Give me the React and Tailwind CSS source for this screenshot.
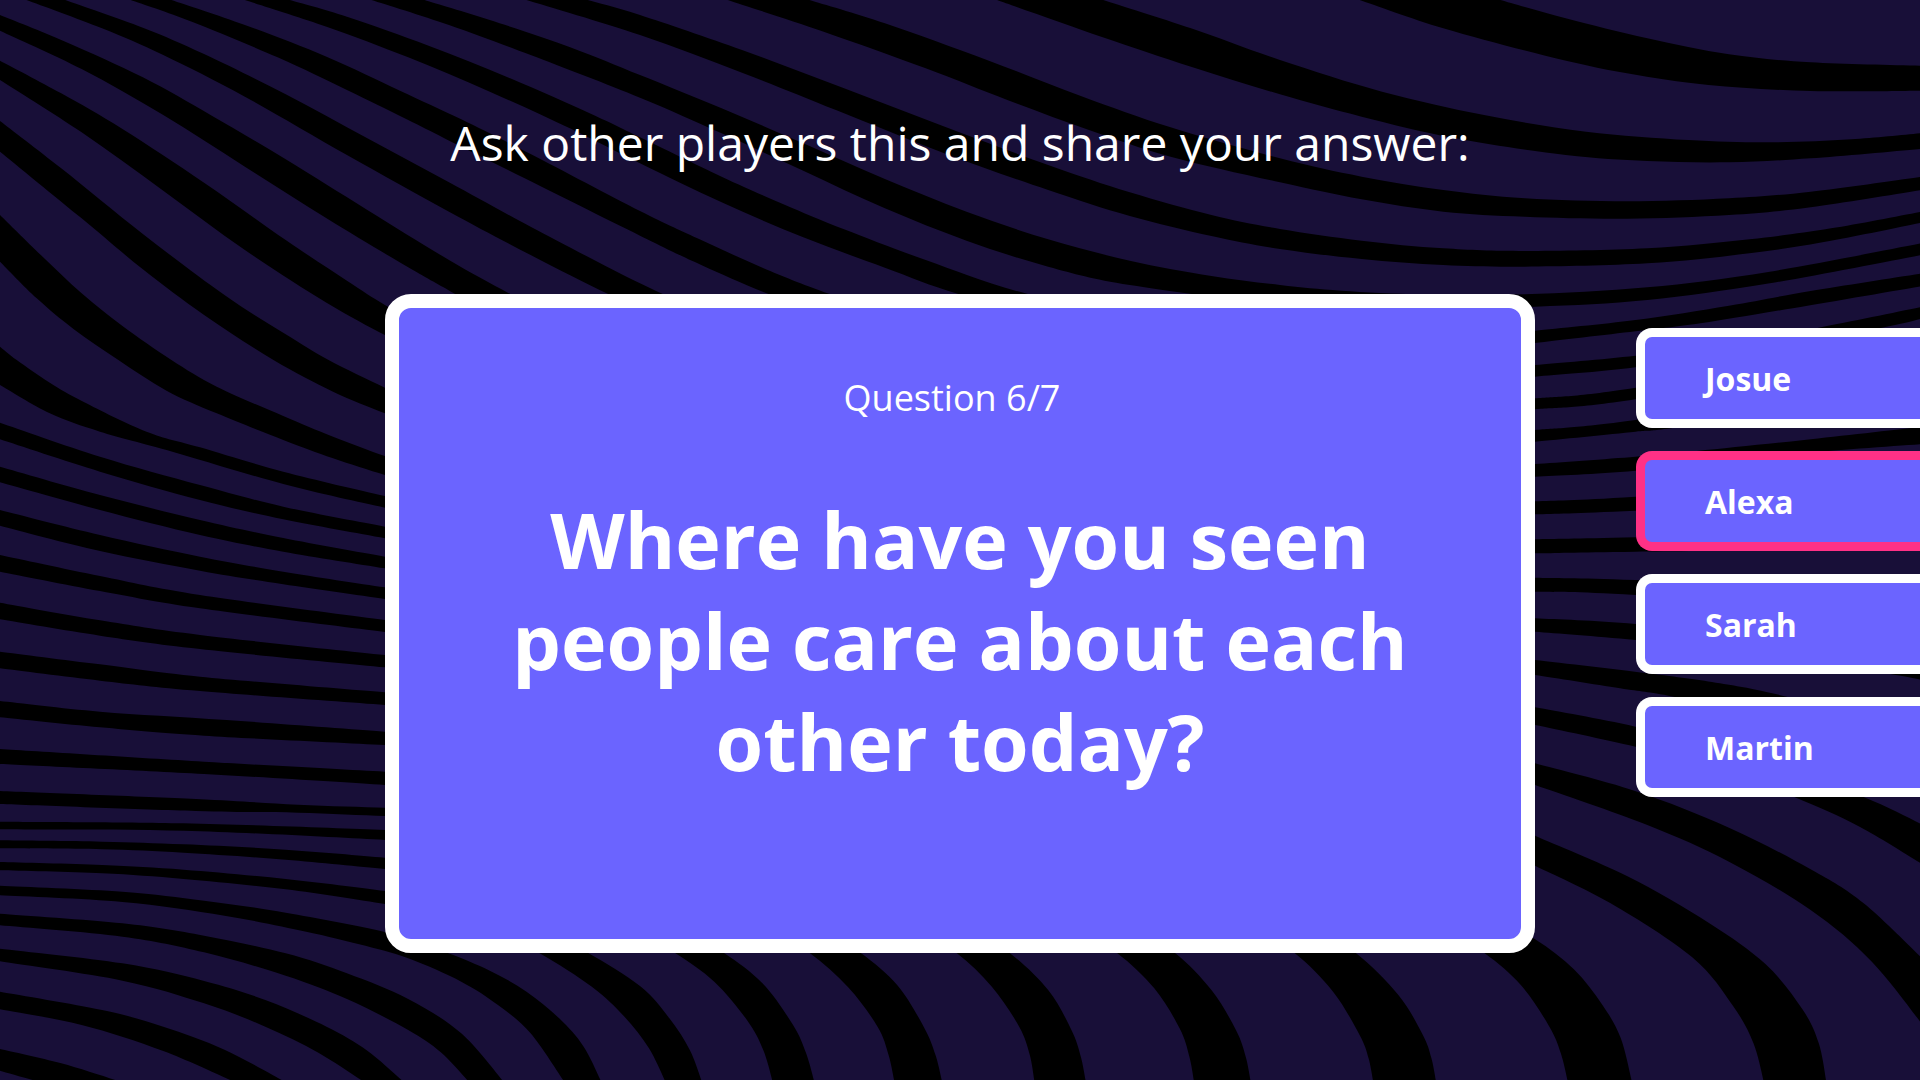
import React from 'react';

const players = [
    { name: 'Josue', active: false },
    { name: 'Alexa', active: true },
    { name: 'Sarah', active: false },
    { name: 'Martin', active: false },
];

const questionLines = ['Where have you seen', 'people care about each', 'other today?'];

// each wave is [upper edge, lower edge], both listed left to right as [x, y]
const waves = [
    // top
    [
        [[3676, 0], [3836, 55], [4036, 115], [4236, 163], [4436, 187], [4720, 198]],
        [[3331, 0], [3536, 85], [3786, 167], [3986, 220], [4186, 255], [4436, 273], [4720, 272]],
    ],
    [
        [[2703, 0], [2918, 85], [3136, 180], [3386, 275], [3636, 345], [3886, 395], [4136, 420], [4336, 427], [4536, 418], [4720, 398]],
        [[2443, 0], [2698, 110], [2918, 200], [3136, 283], [3336, 350], [3566, 415], [3836, 465], [4036, 483], [4236, 487], [4436, 475], [4720, 445]],
    ],
    [
        [[1983, 0], [2168, 70], [2418, 180], [2648, 288], [2868, 382], [3136, 475], [3336, 530], [3536, 570], [3736, 595], [3986, 604], [4236, 595], [4436, 575], [4720, 528]],
        [[1783, 0], [2018, 95], [2268, 205], [2468, 300], [2668, 390], [2868, 470], [3136, 547], [3336, 598], [3536, 635], [3736, 650], [3986, 656], [4236, 645], [4436, 622], [4720, 568]],
    ],
    [
        [[1440, 0], [1568, 45], [1818, 150], [2068, 265], [2318, 382], [2568, 495], [2768, 577], [2968, 645], [3136, 687], [3336, 722], [3536, 745], [3736, 753], [4036, 745], [4286, 718], [4486, 685], [4720, 632]],
        [[1290, 0], [1568, 105], [1818, 218], [2048, 330], [2318, 462], [2568, 570], [2768, 648], [2968, 708], [3136, 747], [3336, 777], [3536, 795], [3736, 800], [4036, 790], [4286, 760], [4486, 722], [4720, 665]],
    ],
    [
        [[1040, 0], [1200, 60], [1400, 143], [1568, 225], [1768, 325], [1968, 430], [2168, 537], [2368, 635], [2568, 718], [2768, 782], [2968, 828], [3136, 855], [3286, 872], [3486, 883], [3736, 883], [4036, 862], [4336, 815], [4720, 727]],
        [[910, 0], [1100, 75], [1300, 165], [1568, 293], [1768, 400], [1968, 512], [2168, 625], [2368, 722], [2568, 800], [2768, 855], [3136, 912], [3436, 928], [3761, 920], [4036, 900], [4336, 850], [4720, 762]],
    ],
    [
        [[710, 0], [850, 50], [1050, 137], [1250, 235], [1450, 343], [1568, 412], [1768, 530], [1918, 612], [2068, 688], [2268, 780], [2518, 882], [2900, 980]],
        [[600, 0], [800, 80], [1000, 172], [1200, 275], [1400, 387], [1568, 490], [1768, 607], [1968, 712], [2168, 803], [2348, 882], [2600, 960]],
    ],
    [
        [[420, 0], [600, 75], [800, 170], [980, 272], [1130, 358], [1300, 462], [1568, 633], [1718, 720], [1868, 803], [2033, 882], [2300, 990]],
        [[320, 0], [470, 65], [680, 172], [850, 270], [1000, 360], [1200, 483], [1568, 707], [1718, 795], [1883, 882], [2100, 980]],
    ],
    [
        [[160, 0], [350, 83], [500, 162], [700, 283], [900, 415], [1100, 547], [1300, 680], [1568, 850], [1750, 950]],
        [[65, 0], [250, 85], [400, 165], [600, 290], [850, 465], [1100, 635], [1300, 765], [1490, 882], [1620, 950]],
    ],
    [
        [[0, 45], [160, 125], [350, 232], [520, 348], [700, 478], [900, 630], [1100, 780], [1250, 882], [1400, 980]],
        [[0, 92], [200, 207], [400, 345], [600, 500], [800, 655], [1000, 802], [1115, 882], [1250, 980]],
    ],
    // left side, running under the question card
    [
        [[0, 182], [150, 280], [300, 387], [500, 548], [700, 720], [850, 842], [943, 915], [1050, 990]],
        [[0, 240], [200, 397], [400, 572], [600, 750], [800, 908], [943, 1005], [1050, 1070]],
    ],
    [
        [[0, 363], [150, 505], [350, 702], [550, 885], [700, 1003], [805, 1080], [943, 1163], [1050, 1220]],
        [[0, 455], [200, 655], [350, 808], [500, 945], [670, 1080], [816, 1175], [943, 1240], [1050, 1290]],
    ],
    [
        [[0, 645], [100, 765], [200, 880], [300, 978], [420, 1080], [531, 1160], [694, 1248], [816, 1310], [943, 1368], [1050, 1410]],
        [[0, 785], [90, 895], [180, 987], [290, 1080], [408, 1172], [531, 1240], [694, 1320], [816, 1375], [943, 1425], [1050, 1460]],
    ],
    [
        [[0, 1040], [41, 1080], [122, 1148], [204, 1205], [359, 1295], [490, 1342], [694, 1415], [943, 1488], [1050, 1515]],
        [[0, 1155], [122, 1240], [245, 1295], [408, 1350], [694, 1452], [943, 1523], [1050, 1550]],
    ],
    [
        [[0, 1268], [245, 1370], [490, 1455], [694, 1520], [943, 1580], [1050, 1605]],
        [[0, 1318], [245, 1415], [490, 1500], [694, 1558], [943, 1615], [1050, 1640]],
    ],
    [
        [[0, 1400], [245, 1485], [490, 1560], [694, 1614], [943, 1670], [1050, 1692]],
        [[0, 1447], [245, 1530], [490, 1605], [694, 1655], [943, 1705], [1050, 1727]],
    ],
    [
        [[0, 1530], [245, 1605], [490, 1670], [694, 1715], [943, 1762], [1050, 1780]],
        [[0, 1577], [245, 1653], [490, 1712], [694, 1753], [943, 1797], [1050, 1815]],
    ],
    [
        [[0, 1665], [245, 1728], [490, 1785], [943, 1860], [1050, 1875]],
        [[0, 1715], [245, 1773], [490, 1825], [943, 1896], [1050, 1910]],
    ],
    [
        [[0, 1808], [245, 1861], [490, 1905], [943, 1965], [1050, 1977]],
        [[0, 1858], [245, 1907], [490, 1947], [943, 2002], [1050, 2013]],
    ],
    [
        [[0, 1955], [245, 1993], [490, 2030], [943, 2077], [1050, 2087]],
        [[0, 2005], [245, 2042], [490, 2073], [943, 2115], [1050, 2124]],
    ],
    [
        [[0, 2103], [245, 2135], [555, 2160], [943, 2195], [1050, 2205]],
        [[0, 2152], [245, 2182], [500, 2207], [943, 2235], [1050, 2242]],
    ],
    [
        [[0, 2247], [500, 2285], [943, 2315], [1050, 2322]],
        [[0, 2292], [500, 2322], [943, 2355], [1050, 2363]],
    ],
    [
        [[0, 2373], [480, 2397], [730, 2414], [943, 2423], [1050, 2428]],
        [[0, 2412], [480, 2433], [730, 2438], [943, 2448], [1050, 2453]],
    ],
    [
        [[0, 2465], [450, 2470], [943, 2490], [1050, 2497]],
        [[0, 2488], [450, 2492], [943, 2520], [1050, 2530]],
    ],
    [
        [[0, 2521], [250, 2525], [450, 2533], [700, 2549], [943, 2573], [1050, 2586]],
        [[0, 2545], [250, 2548], [450, 2558], [700, 2579], [943, 2607], [1050, 2622]],
    ],
    [
        [[0, 2586], [250, 2595], [450, 2609], [700, 2637], [943, 2673], [1050, 2692]],
        [[0, 2611], [250, 2620], [450, 2637], [700, 2668], [943, 2712], [1050, 2735]],
    ],
    // bottom fans
    [
        [[0, 2657], [300, 2675], [500, 2702], [700, 2738], [943, 2796], [1095, 2858], [1200, 2912], [1290, 2975], [1370, 3055], [1430, 3140], [1475, 3250]],
        [[0, 2686], [300, 2706], [550, 2747], [750, 2795], [880, 2833], [1000, 2875], [1130, 2945], [1220, 3015], [1300, 3100], [1385, 3250]],
    ],
    [
        [[0, 2741], [300, 2770], [500, 2807], [700, 2860], [850, 2920], [1000, 2997], [1130, 3100], [1237, 3250]],
        [[0, 2776], [300, 2810], [500, 2857], [700, 2927], [850, 2997], [1000, 3090], [1080, 3157], [1152, 3250]],
    ],
    [
        [[0, 2846], [300, 2890], [500, 2943], [650, 3000], [800, 3080], [900, 3152], [993, 3250]],
        [[0, 2884], [300, 2942], [500, 3010], [650, 3080], [780, 3158], [897, 3250]],
    ],
    [
        [[0, 2975], [250, 3030], [400, 3080], [550, 3149], [705, 3250]],
        [[0, 3028], [200, 3075], [400, 3153], [582, 3250]],
    ],
    [
        [[0, 3147], [150, 3190], [300, 3247]],
        [[0, 3212], [100, 3247]],
    ],
    [
        [[1300, 2770], [1440, 2858], [1568, 2958], [1640, 3055], [1690, 3150], [1721, 3250]],
        [[1180, 2770], [1320, 2858], [1450, 2960], [1530, 3050], [1590, 3145], [1632, 3250]],
    ],
    [
        [[1650, 2770], [1773, 2858], [1868, 2950], [1943, 3075], [1975, 3160], [1996, 3250]],
        [[1530, 2770], [1653, 2858], [1750, 2945], [1830, 3060], [1870, 3150], [1894, 3250]],
    ],
    [
        [[1990, 2770], [2108, 2858], [2198, 2955], [2263, 3080], [2292, 3165], [2309, 3250]],
        [[1860, 2770], [1983, 2858], [2078, 2962], [2150, 3080], [2177, 3165], [2192, 3250]],
    ],
    [
        [[2360, 2770], [2473, 2858], [2568, 2970], [2625, 3090], [2648, 3170], [2661, 3250]],
        [[2230, 2770], [2343, 2858], [2430, 2960], [2497, 3080], [2523, 3165], [2535, 3250]],
    ],
    [
        [[2760, 2770], [2878, 2858], [2968, 2970], [3028, 3090], [3052, 3170], [3065, 3250]],
        [[2620, 2770], [2736, 2858], [2828, 2965], [2890, 3085], [2914, 3170], [2926, 3250]],
    ],
    [
        [[3200, 2770], [3321, 2858], [3426, 2985], [3486, 3105], [3507, 3175], [3519, 3250]],
        [[3050, 2770], [3171, 2858], [3266, 2975], [3331, 3105], [3353, 3175], [3365, 3250]],
    ],
    [
        [[3640, 2740], [3761, 2818], [3856, 2908], [3926, 3015], [3971, 3115], [3999, 3250]],
        [[3500, 2750], [3636, 2858], [3726, 2955], [3796, 3080], [3824, 3160], [3842, 3250]],
    ],
    [
        [[3700, 2470], [3761, 2507], [3986, 2628], [4186, 2768], [4326, 2893], [4416, 3028], [4456, 3130], [4475, 3250]],
        [[3700, 2560], [3761, 2597], [3946, 2710], [4146, 2872], [4246, 3018], [4296, 3130], [4322, 3250]],
    ],
    // right side, running under the player cards
    [
        [[3700, 2270], [3761, 2290], [4006, 2373], [4236, 2483], [4436, 2608], [4566, 2710], [4720, 2888]],
        [[3700, 2330], [3761, 2355], [4036, 2475], [4236, 2585], [4436, 2730], [4586, 2885], [4720, 3090]],
    ],
    [
        [[3700, 2110], [3761, 2122], [4007, 2180], [4300, 2270], [4566, 2391], [4720, 2480]],
        [[3700, 2163], [3761, 2175], [4007, 2240], [4200, 2300], [4396, 2391], [4556, 2480], [4720, 2600]],
    ],
    [
        [[3700, 1973], [3761, 1980], [4051, 2022], [4214, 2050], [4377, 2090], [4720, 2200]],
        [[3700, 2018], [3761, 2025], [3969, 2065], [4100, 2090], [4377, 2160], [4720, 2290]],
    ],
    [
        [[3700, 1852], [3761, 1855], [4007, 1872], [4377, 1920], [4720, 1990]],
        [[3700, 1890], [3761, 1895], [4007, 1920], [4377, 1970], [4631, 2022], [4720, 2042]],
    ],
    [
        [[3700, 1732], [3761, 1733], [4007, 1740], [4720, 1775]],
        [[3700, 1774], [3761, 1775], [4007, 1785], [4720, 1850]],
    ],
    [
        [[3700, 1619], [3761, 1618], [4007, 1612], [4720, 1590]],
        [[3700, 1661], [3761, 1660], [4007, 1655], [4720, 1645]],
    ],
    [
        [[3700, 1507], [3761, 1504], [4007, 1490], [4720, 1430]],
        [[3700, 1546], [3761, 1543], [4007, 1532], [4720, 1490]],
    ],
    [
        [[3700, 1395], [3761, 1392], [4007, 1370], [4157, 1353], [4420, 1320], [4720, 1279]],
        [[3700, 1433], [3761, 1430], [4007, 1412], [4377, 1363], [4720, 1331]],
    ],
    [
        [[3700, 1296], [3761, 1290], [4007, 1260], [4720, 1130]],
        [[3700, 1331], [3761, 1325], [4007, 1295], [4116, 1281], [4720, 1180]],
    ],
    [
        [[3700, 1200], [3761, 1195], [4007, 1163], [4720, 1010]],
        [[3700, 1233], [3761, 1228], [4007, 1198], [4720, 1050]],
    ],
    [
        [[3700, 1100], [3761, 1095], [4007, 1067], [4236, 1030], [4456, 983], [4720, 918]],
        [[3700, 1136], [3761, 1130], [4007, 1102], [4336, 1040], [4611, 983], [4720, 952]],
    ],
    [
        [[3700, 998], [3761, 992], [4007, 960], [4236, 917], [4436, 873], [4720, 818]],
        [[3700, 1036], [3761, 1029], [4007, 994], [4166, 970], [4376, 928], [4720, 856]],
    ],
];

// Catmull-Rom spline written out as cubic segments
const curve = (pts) =>
    pts
        .slice(1)
        .map((p2, i) => {
            const p1 = pts[i];
            const p0 = pts[i - 1] ?? p1;
            const p3 = pts[i + 2] ?? p2;
            const c1 = [p1[0] + (p2[0] - p0[0]) / 6, p1[1] + (p2[1] - p0[1]) / 6];
            const c2 = [p2[0] - (p3[0] - p1[0]) / 6, p2[1] - (p3[1] - p1[1]) / 6];
            return `C${c1} ${c2} ${p2}`;
        })
        .join('');

const wavePath = ([upper, lower]) => {
    const back = [...lower].reverse();
    return `M${upper[0]}${curve(upper)}L${back[0]}${curve(back)}Z`;
};

const WaveBackground = () => {
    return (
        <svg
            className="absolute inset-0 h-full w-full"
            viewBox="0 0 4704 3240"
            preserveAspectRatio="none"
            aria-hidden="true"
        >
            {waves.map((wave, index) => (
                <path key={index} d={wavePath(wave)} fill="#000000" />
            ))}
        </svg>
    );
};

const QuestionCard = ({ number, total, lines }) => {
    return (
        <section className="min-h-[659px] rounded-[26px] border-[14px] border-white bg-[#6b64ff] pt-[70px] text-center">
            <p className="pr-4 text-[36px] leading-10 font-medium">
                Question {number}/{total}
            </p>
            <h2 className="mt-[71px] text-[77px] leading-[101px] font-bold">
                {lines.map((line, index) => (
                    <span key={index} className="block whitespace-nowrap">{line}</span>
                ))}
            </h2>
        </section>
    );
};

const PlayerList = ({ list }) => {
    return (
        <ul className="mt-[34px] ml-[101px] flex flex-col gap-[23px]">
            {list.map((player) => (
                <li
                    key={player.name}
                    className={`flex h-[100px] items-center rounded-l-[16px] border-[9px] border-r-0 bg-[#6b64ff] pt-0.5 pl-[60px] text-[32px] font-bold ${
                        player.active ? 'border-[#ff3186]' : 'border-white'
                    }`}
                >
                    {player.name}
                </li>
            ))}
        </ul>
    );
};

const App = () => {
    return (
        <div className="relative min-h-screen overflow-hidden bg-[#180f38] font-['Open_Sans',sans-serif] text-white">
            <WaveBackground />
            <div className="relative">
                <header className="flex h-[294px] items-start justify-center pt-[113px]">
                    <h1 className="text-[48px] leading-[60px] font-normal">
                        Ask other players this and share your answer:
                    </h1>
                </header>
                <main className="grid grid-cols-[385px_1fr_385px] items-start">
                    <div className="col-start-2">
                        <QuestionCard number={6} total={7} lines={questionLines} />
                    </div>
                    <PlayerList list={players} />
                </main>
            </div>
        </div>
    );
};

export default App;
